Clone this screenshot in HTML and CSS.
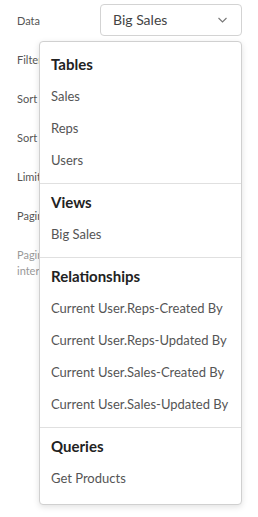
FILE: index.html
```html
<!DOCTYPE html>
<html lang="en">
<head>
    <meta charset="UTF-8">
    <meta name="viewport" content="width=device-width, initial-scale=1.0">
    <title>Data settings</title>
    <link rel="stylesheet" href="styles.css">
</head>
<body>
    <div class="settings">
        <div class="row">
            <span class="label">Data</span>
            <button class="select">
                <span>Big Sales</span>
                <svg class="chevron" width="9" height="6" viewBox="0 0 9 6">
                    <path d="M0.5 1 L4.5 5 L8.5 1" fill="none" stroke="#777" stroke-width="1.1"/>
                </svg>
            </button>
        </div>
        <div class="row"><span class="label">Filters</span></div>
        <div class="row"><span class="label">Sort column</span></div>
        <div class="row"><span class="label">Sort order</span></div>
        <div class="row"><span class="label">Limit</span></div>
        <div class="row"><span class="label">Pagination</span></div>
        <p class="hint">Pagination interval</p>

        <div class="menu">
            <div class="group">
                <div class="group-title">Tables</div>
                <div class="item">Sales</div>
                <div class="item">Reps</div>
                <div class="item">Users</div>
            </div>
            <div class="group">
                <div class="group-title">Views</div>
                <div class="item">Big Sales</div>
            </div>
            <div class="group">
                <div class="group-title">Relationships</div>
                <div class="item">Current User.Reps-Created By</div>
                <div class="item">Current User.Reps-Updated By</div>
                <div class="item">Current User.Sales-Created By</div>
                <div class="item">Current User.Sales-Updated By</div>
            </div>
            <div class="group">
                <div class="group-title">Queries</div>
                <div class="item">Get Products</div>
            </div>
        </div>
    </div>
</body>
</html>
```

FILE: styles.css
```css
body {
    margin: 0;
    background-color: white;
    font-family: Lato, "Open Sans", sans-serif;
}

.settings {
    position: relative;
    min-height: 517px;
    box-sizing: border-box;
    padding: 4px 16px 0 17px;
}

.row {
    display: flex;
    align-items: center;
    height: 31px;
    margin-bottom: 8px;
}

.label {
    width: 83px;
    padding-top: 2px;
    font-size: 11px;
    color: #555;
    white-space: nowrap;
}

.select {
    display: flex;
    align-items: center;
    justify-content: space-between;
    width: 142px;
    height: 32px;
    padding: 0 14px 0 12px;
    border: 1px solid #d3d3d3;
    border-radius: 4px;
    background-color: white;
    font-family: inherit;
    font-size: 14px;
    color: #444;
}

.hint {
    margin: 17px 0 0;
    width: 60px;
    font-size: 11px;
    line-height: 16px;
    color: #999;
}

.menu {
    position: absolute;
    left: 39px;
    top: 41px;
    width: 201px;
    padding: 4px 0 3px;
    border: 1px solid #d0d0d0;
    border-radius: 4px;
    background-color: white;
    box-shadow: 0 2px 6px rgba(0, 0, 0, 0.12);
}

.group {
    padding: 2px 0 7px;
    border-bottom: 1px solid #e0e0e0;
}

.group:last-child {
    border-bottom: none;
}

.group-title,
.item {
    height: 32px;
    display: flex;
    align-items: center;
    padding-left: 11px;
    white-space: nowrap;
}

.group-title {
    font-size: 15px;
    font-weight: bold;
    color: #222;
}

.item {
    font-size: 13px;
    color: #555;
}
```
